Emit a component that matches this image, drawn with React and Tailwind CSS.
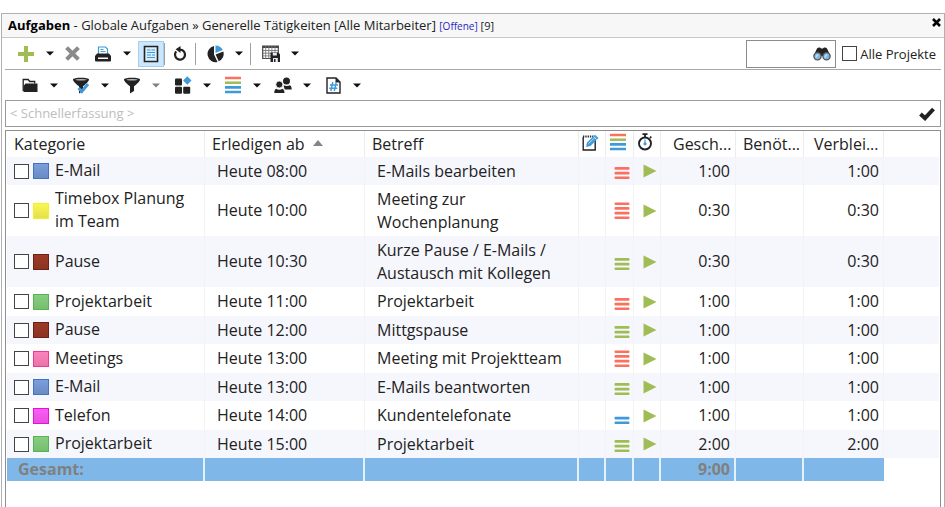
import React, { useState } from 'react';

const GREEN = '#a0bd55';
const RED = '#fb7160';
const BLUE = '#3f9ad9';
const INK = '#222222';

const SWATCHES = {
  'E-Mail': 'border-[#4572c0] from-[#7a9fdb] to-[#698bc4]',
  'Timebox Planung im Team': 'border-[#f4f02c] from-[#f9f74e] to-[#e4e04c]',
  Pause: 'border-[#6b2018] from-[#9c3a26] to-[#8d3322]',
  Projektarbeit: 'border-[#56b356] from-[#87cf7f] to-[#76bd70]',
  Meetings: 'border-[#f0388f] from-[#fb83bd] to-[#e974ab]',
  Telefon: 'border-[#e312dc] from-[#fb5cf4] to-[#e651df]',
};

const TASKS = [
  { category: 'E-Mail', due: 'Heute 08:00', subject: 'E-Mails bearbeiten', prio: 3, color: RED, time: '1:00' },
  { category: 'Timebox Planung im Team', due: 'Heute 10:00', subject: 'Meeting zur Wochenplanung', prio: 4, color: RED, time: '0:30', tall: true },
  { category: 'Pause', due: 'Heute 10:30', subject: 'Kurze Pause / E-Mails / Austausch mit Kollegen', prio: 3, color: GREEN, time: '0:30', tall: true },
  { category: 'Projektarbeit', due: 'Heute 11:00', subject: 'Projektarbeit', prio: 3, color: RED, time: '1:00' },
  { category: 'Pause', due: 'Heute 12:00', subject: 'Mittgspause', prio: 3, color: GREEN, time: '1:00' },
  { category: 'Meetings', due: 'Heute 13:00', subject: 'Meeting mit Projektteam', prio: 4, color: RED, time: '1:00' },
  { category: 'E-Mail', due: 'Heute 13:00', subject: 'E-Mails beantworten', prio: 3, color: GREEN, time: '1:00' },
  { category: 'Telefon', due: 'Heute 14:00', subject: 'Kundentelefonate', prio: 2, color: BLUE, time: '1:00' },
  { category: 'Projektarbeit', due: 'Heute 15:00', subject: 'Projektarbeit', prio: 3, color: GREEN, time: '2:00' },
];

// --- Icons ---
function PlusIcon() {
  return (
    <svg width="16" height="16" viewBox="0 0 16 16">
      <path d="M6 0h4v6h6v4h-6v6H6v-6H0V6h6z" fill={GREEN} />
    </svg>
  );
}

function DeleteIcon() {
  return (
    <svg width="15" height="15" viewBox="0 0 14 14">
      <path d="M1.500 1.500l11 11M12.500 1.500l-11 11" stroke="#8a8a8a" strokeWidth="3.800" />
    </svg>
  );
}

function PrinterIcon() {
  return (
    <svg width="16" height="16" viewBox="0 0 16 16">
      <path d="M3.500 8V1h7l2 2v5" fill="#fff" stroke={BLUE} strokeWidth="1.200" />
      <path d="M5.500 3.500h3M5.500 5.500h5" stroke={BLUE} />
      <path d="M2 7.500h12l2 2.500v4.500a1 1 0 0 1-1 1H1a1 1 0 0 1-1-1V10z" fill={INK} />
      <path d="M3 11.500h10v1.500H3z" fill="#fff" />
    </svg>
  );
}

function ListIcon() {
  return (
    <svg width="16" height="18" viewBox="0 0 16 18">
      <path d="M1.500 1.500h13v15h-13z" fill="#d9edfb" stroke={INK} strokeWidth="1.600" />
      <path d="M4 5h3.500M8.500 5H12M4 7.500h8M4 10h4M9 10h3M4 12.500h8" stroke={BLUE} strokeWidth="1.200" />
    </svg>
  );
}

function RefreshIcon() {
  return (
    <svg width="14" height="16" viewBox="0 0 14 16">
      <path d="M3.200 5.400A5 5 0 1 0 9.500 4.300L6 3.400" fill="none" stroke={INK} strokeWidth="2.200" />
      <path d="M7.500 0v7L2.600 3.200z" fill={INK} />
    </svg>
  );
}

function PieIcon() {
  return (
    <svg width="18" height="18" viewBox="0 0 18 18">
      <path d="M8 1v8.500l3.500 7.500A8 8 0 1 1 8 1z" fill={INK} />
      <path d="M9.500.5a8 8 0 0 1 7.200 4.500L9.500 8z" fill={BLUE} />
      <path d="M17.300 6.500a8 8 0 0 1-4.600 9.800L9.600 9.600z" fill={INK} />
    </svg>
  );
}

function TableSaveIcon() {
  return (
    <svg width="18" height="17" viewBox="0 0 18 17">
      <path d="M.7 1h15.600v12.500H.7z" fill="#fff" stroke="#444" strokeWidth="1.200" />
      <path d="M.7 2h15.600" stroke="#444" strokeWidth="2" />
      <path d="M.7 5.500h15.600M.7 8.200h15.600M.7 10.900h15.600M3.700 1v12.500M6.800 1v12.500M9.900 1v12.500M13 1v12.500" stroke="#777" strokeWidth=".9" />
      <path d="M8.500 7.500H16l2 1.800V17H8.500z" fill={INK} />
      <path d="M10.800 7.700h4v2.800h-4zM11 13h4.800v4H11z" fill="#e8eef3" />
      <path d="M12 14h1.500v3H12z" fill={INK} />
    </svg>
  );
}

function FolderIcon() {
  return (
    <svg width="16" height="15" viewBox="0 0 16 15">
      <path d="M1.200 13V1.500h5l1.500 2h5v2" fill="#fff" stroke={INK} strokeWidth="1.300" />
      <path d="M3.500 5.500h12V14H1.500V8z" fill={INK} />
    </svg>
  );
}

function FunnelIcon({ checked }) {
  return (
    <svg width="18" height="17" viewBox="0 0 18 17">
      <path d="M1 2.500C1 .3 17 .3 17 2.500c0 1.800-3 4.500-6 6.800V14l-4 2.500V9.300C4 7 1 4.300 1 2.500z" fill={INK} />
      <ellipse cx="9" cy="2.700" rx="5.500" ry=".8" fill="#b9b9b9" />
      {checked && <path d="M6.500 11l3.300 3.500L16 7" fill="none" stroke={BLUE} strokeWidth="3" />}
    </svg>
  );
}

function BlocksIcon() {
  return (
    <svg width="18" height="18" viewBox="0 0 18 18">
      <rect x="1" y="2.500" width="7" height="7" rx="1" fill={INK} />
      <rect x="1" y="10.700" width="7" height="7" rx="1" fill={INK} />
      <rect x="9.200" y="10.700" width="7" height="7" rx="1" fill={INK} />
      <path d="M13.300.3l4.200 4.200-4.200 4.200-4.200-4.200z" fill={BLUE} />
    </svg>
  );
}

function PriorityIcon() {
  return (
    <svg width="16" height="18" viewBox="0 0 16 18">
      <path d="M0 2h16" stroke={RED} strokeWidth="2.500" />
      <path d="M0 6.700h16" stroke={GREEN} strokeWidth="2.500" />
      <path d="M0 11.300h16M0 16h16" stroke={BLUE} strokeWidth="2.700" />
    </svg>
  );
}

function PeopleIcon() {
  return (
    <svg width="18" height="17" viewBox="0 0 18 17">
      <circle cx="12.500" cy="3.900" r="3.500" fill={INK} />
      <path d="M9.500 8.200c2 1 4.500 1 6.500 0 1.300.8 1.700 2.300 1.700 4.300h-7z" fill={INK} />
      <circle cx="5.300" cy="7.500" r="3.500" fill={INK} stroke="#fff" strokeWidth=".8" />
      <path d="M2 11.800c2 1.200 4.600 1.200 6.600 0 1.400.8 1.900 2.200 1.900 4.200H.3c0-2 .4-3.400 1.700-4.200z" fill={INK} />
    </svg>
  );
}

function HashPageIcon() {
  return (
    <svg width="15" height="17" viewBox="0 0 15 17">
      <path d="M1 1h9l4 4v11H1z" fill="#fff" stroke={INK} strokeWidth="1.400" />
      <path d="M9.500 1v4.500H14z" fill={INK} />
      <path d="M6.800 5L4.800 14M10.300 5l-2 9M4 8h8M3.300 11.300h8" stroke={BLUE} strokeWidth="1.400" />
    </svg>
  );
}

function BinocularsIcon() {
  return (
    <svg width="18" height="14" viewBox="0 0 18 14">
      <path d="M4 1.500C5 0 7.500 0 8.200 1.500h1.600C10.500 0 13 0 14 1.500L17.500 9H.5z" fill={INK} />
      <circle cx="4.500" cy="9.300" r="3.600" fill="#7fb9e6" stroke="#555" strokeWidth="1.300" />
      <circle cx="13.500" cy="9.300" r="3.600" fill="#7fb9e6" stroke="#555" strokeWidth="1.300" />
      <path d="M2.700 10.500l2-3M11.700 10.500l2-3" stroke="#d8ecfa" strokeWidth="1.200" />
    </svg>
  );
}

function NoteIcon() {
  return (
    <svg width="17" height="17" viewBox="0 0 17 17">
      <path d="M1.200 3v13h12V3" fill="#fff" stroke={INK} strokeWidth="1.400" />
      <path d="M1 2.500h11" stroke={INK} strokeWidth="2" strokeDasharray="1.300 1" />
      <path d="M4 13l1-4.500L13 .7 16.500 4 8.500 12z" fill={BLUE} />
      <path d="M6.500 9.500l7-6.500M11.500 2.500l3.500 3.300" stroke="#b7dbf3" />
    </svg>
  );
}

function StopwatchIcon() {
  return (
    <svg width="16" height="18" viewBox="0 0 16 18">
      <path d="M5.500 1.200h5M8 1v3M13 3.700l1.300 1.300" stroke={INK} strokeWidth="1.800" />
      <circle cx="8" cy="10.500" r="6" fill="#fff" stroke={INK} strokeWidth="1.900" />
      <path d="M8 6.500V10" stroke={BLUE} strokeWidth="1.200" />
      <circle cx="8" cy="10.800" r="1.600" fill={BLUE} />
    </svg>
  );
}

function CheckIcon() {
  return (
    <svg width="16" height="14" viewBox="0 0 16 14">
      <path d="M1.500 7l4.500 4.200L14.500 2" fill="none" stroke={INK} strokeWidth="4" />
    </svg>
  );
}

// Bars are stacked from the bottom, one per priority level
function PriorityBars({ level, color }) {
  return (
    <svg width="16" height="18" viewBox="0 0 16 18" className="mx-auto">
      {Array.from({ length: level }, (_, i) => (
        <rect key={i} x="0.5" y={14.5 - i * 4.7} width="15" height="2.600" rx="1" fill={color} />
      ))}
    </svg>
  );
}

// --- Toolbar parts ---
function ToolButton({ label, active, children }) {
  return (
    <button
      type="button"
      aria-label={label}
      className={`flex h-[26px] w-[26px] items-center justify-center ${active ? 'border border-[#9fd0f5] bg-[#cce6fb]' : ''}`}
    >
      {children}
    </button>
  );
}

function MenuArrow({ label, muted }) {
  return (
    <button type="button" aria-label={label} className="flex h-[26px] w-[22px] items-center justify-center">
      <svg width="8" height="5" viewBox="0 0 8 5">
        <path d="M0 .5h8L4 4.500z" fill={muted ? '#808080' : '#111111'} />
      </svg>
    </button>
  );
}

function ToolMenu({ label, muted, children }) {
  return (
    <div className="flex">
      <ToolButton label={label}>{children}</ToolButton>
      <MenuArrow label={`${label} Menü`} muted={muted} />
    </div>
  );
}

function Separator() {
  return <div className="h-[22px] w-px bg-[#a0a0a0]" />;
}

const CHECKBOX =
  'h-[15px] w-[15px] shrink-0 appearance-none border border-[#444444] bg-white checked:bg-[#3f9ad9]';
const HEAD = 'border-r border-[#ececec] p-0 text-left font-normal';
const HEAD_ICON = 'flex justify-center pr-1 pb-1';
const CELL = 'border-r border-[#f3f3f5] p-0';
const FOOT = 'border-r-2 border-[#e4f0fa] bg-[#7fb8e8] p-0 bg-clip-padding';

function TaskRow({ task, striped }) {
  const [done, setDone] = useState(false);
  const [running, setRunning] = useState(false);
  const height = task.tall ? 'h-[51px]' : striped ? 'h-[28px]' : 'h-[29px]';

  return (
    <tr className={`${height} ${striped ? 'bg-[#f6f6fd]' : ''}`}>
      <td className={CELL}>
        <div className="flex items-center pl-[7px]">
          <input
            type="checkbox"
            aria-label={`${task.category}, ${task.due} erledigt`}
            checked={done}
            onChange={(e) => setDone(e.target.checked)}
            className={CHECKBOX}
          />
          <span className={`ml-1 h-4 w-4 shrink-0 border bg-linear-to-b ${SWATCHES[task.category]}`} />
          <span className="ml-1.5 pt-0.5 pb-[3px]">{task.category}</span>
        </div>
      </td>
      <td className={`${CELL} pl-3`}>{task.due}</td>
      <td className={`${CELL} pl-3`}>{task.subject}</td>
      <td className={CELL} />
      <td className={`${CELL} pl-1`}>
        <PriorityBars level={task.prio} color={task.color} />
      </td>
      <td className={CELL}>
        <button
          type="button"
          aria-label={`${task.subject} starten`}
          aria-pressed={running}
          onClick={() => setRunning(!running)}
          className="mx-auto flex pl-1.5"
        >
          <svg width="14" height="14" viewBox="0 0 14 14">
            <path d="M.5.5L13.500 7 .5 13.500z" fill={GREEN} />
          </svg>
        </button>
      </td>
      <td className={`${CELL} pr-[5px] text-right`}>{task.time}</td>
      <td className={CELL} />
      <td className={`${CELL} pr-1 text-right`}>{task.time}</td>
      <td className="p-0" />
    </tr>
  );
}

function App() {
  const [allProjects, setAllProjects] = useState(false);
  const [search, setSearch] = useState('');
  const [quickEntry, setQuickEntry] = useState('');

  return (
    <div className="flex min-h-screen flex-col bg-white pt-[13px] pl-px font-['Open_Sans','Noto_Sans',sans-serif] text-[#222222]">
      <main className="flex grow flex-col border border-b-0 border-[#b0b0b0]">
        <header className="flex h-6 justify-between border-b border-[#c8c8c8] bg-[#f7f7f7] pr-[3px] pl-1.5">
          <h1 className="flex items-center text-[13px] leading-5 whitespace-pre">
            <span>
              <b className="text-black">Aufgaben</b> - Globale Aufgaben » Generelle Tätigkeiten [Alle Mitarbeiter]{' '}
              <a href="#offene" className="text-[10px] text-[#2a1fc0]">[Offene]</a>
              <span className="text-[11px]"> [9]</span>
            </span>
          </h1>
          <button type="button" aria-label="Schließen" className="flex h-4 items-center">
            <svg width="9" height="9" viewBox="0 0 9 9">
              <path d="M1 1l7 7M8 1L1 8" stroke="#000" strokeWidth="2.600" />
            </svg>
          </button>
        </header>

        <div className="flex grow flex-col px-[3px]">
          <div className="flex h-8 items-center justify-between border-b border-[#a8a8a8]">
            <div className="flex items-center pl-2">
              <ToolMenu label="Neu"><PlusIcon /></ToolMenu>
              <button type="button" aria-label="Löschen" className="mr-[7px] flex h-[26px] w-[22px] items-center justify-center">
                <DeleteIcon />
              </button>
              <ToolMenu label="Drucken"><PrinterIcon /></ToolMenu>
              <ToolButton label="Listenansicht" active><ListIcon /></ToolButton>
              <Separator />
              <div className="px-0.5">
                <ToolButton label="Aktualisieren"><RefreshIcon /></ToolButton>
              </div>
              <Separator />
              <div className="pl-1.5">
                <ToolMenu label="Auswertung"><PieIcon /></ToolMenu>
              </div>
              <Separator />
              <div className="pl-[7px]">
                <ToolMenu label="Tabelle speichern"><TableSaveIcon /></ToolMenu>
              </div>
            </div>
            <div className="flex items-center pr-[5px]">
              <div className="flex h-7 w-[90px] items-center border border-[#8c8c8c] pr-1">
                <input
                  type="text"
                  aria-label="Suchen"
                  value={search}
                  onChange={(e) => setSearch(e.target.value)}
                  className="min-w-0 grow px-1 text-[13px] outline-none"
                />
                <button type="button" aria-label="Suche starten"><BinocularsIcon /></button>
              </div>
              <label className="ml-1.5 flex items-center gap-[3px] text-[13px] leading-5">
                <input
                  type="checkbox"
                  checked={allProjects}
                  onChange={(e) => setAllProjects(e.target.checked)}
                  className={CHECKBOX}
                />
                Alle Projekte
              </label>
            </div>
          </div>

          <div className="flex h-[30px] items-center gap-[3px] pl-3">
            <ToolMenu label="Ordner"><FolderIcon /></ToolMenu>
            <ToolMenu label="Aktiver Filter"><FunnelIcon checked /></ToolMenu>
            <ToolMenu label="Filter" muted><FunnelIcon /></ToolMenu>
            <div className="flex gap-0.5">
              <ToolMenu label="Kategorien"><BlocksIcon /></ToolMenu>
              <ToolMenu label="Priorität"><PriorityIcon /></ToolMenu>
              <ToolMenu label="Mitarbeiter"><PeopleIcon /></ToolMenu>
              <ToolMenu label="Nummer"><HashPageIcon /></ToolMenu>
            </div>
          </div>

          <div className="flex h-[27px] items-center border border-[#9a9a9a] pr-[5px]">
            <input
              type="text"
              aria-label="Schnellerfassung"
              placeholder="< Schnellerfassung >"
              value={quickEntry}
              onChange={(e) => setQuickEntry(e.target.value)}
              className="min-w-0 grow px-1 text-[13px] outline-none placeholder:text-[#bdbdbd]"
            />
            <button type="button" aria-label="Übernehmen"><CheckIcon /></button>
          </div>

          <div className="mt-[3px] grow border border-b-0 border-[#8f8f8f] px-px">
            <table className="w-full table-fixed border-separate border-spacing-0 text-[16px] leading-[23px]">
              <colgroup>
                <col className="w-[198px]" />
                <col className="w-40" />
                <col className="w-[214px]" />
                <col className="w-[27px]" />
                <col className="w-7" />
                <col className="w-[27px]" />
                <col className="w-[75px]" />
                <col className="w-[68px]" />
                <col className="w-20" />
                <col />
              </colgroup>
              <thead>
                <tr className="h-[26px]">
                  <th className={`${HEAD} pl-[7px]`}>Kategorie</th>
                  <th className={`${HEAD} pl-[7px]`} aria-sort="ascending">
                    <button type="button" className="flex items-center gap-2">
                      Erledigen ab
                      <svg width="10" height="6" viewBox="0 0 10 6" className="mb-0.5">
                        <path d="M5 0l5 6H0z" fill="#858585" />
                      </svg>
                    </button>
                  </th>
                  <th className={`${HEAD} pl-[7px]`}>Betreff</th>
                  <th className={HEAD} aria-label="Notiz"><span className={HEAD_ICON}><NoteIcon /></span></th>
                  <th className={HEAD} aria-label="Priorität"><span className={HEAD_ICON}><PriorityIcon /></span></th>
                  <th className={HEAD} aria-label="Zeiterfassung"><span className={HEAD_ICON}><StopwatchIcon /></span></th>
                  <th className={`${HEAD} pl-3`}>Gesch...</th>
                  <th className={`${HEAD} pl-[7px]`}>Benöt...</th>
                  <th className={`${HEAD} pl-2.5`}>Verblei...</th>
                  <th className="p-0" />
                </tr>
              </thead>
              <tbody>
                {TASKS.map((task, i) => (
                  <TaskRow key={i} task={task} striped={i % 2 === 0} />
                ))}
              </tbody>
              <tfoot>
                <tr className="h-[23px] font-bold text-[#808080]">
                  <td className={`${FOOT} pl-[11px]`}>Gesamt:</td>
                  <td className={FOOT} />
                  <td className={FOOT} />
                  <td className={FOOT} />
                  <td className={FOOT} />
                  <td className={FOOT} />
                  <td className={`${FOOT} pr-1 text-right`}>9:00</td>
                  <td className={FOOT} />
                  <td className="bg-[#7fb8e8] p-0" />
                  <td className="p-0" />
                </tr>
              </tfoot>
            </table>
          </div>
        </div>
      </main>
    </div>
  );
}

export default App;
